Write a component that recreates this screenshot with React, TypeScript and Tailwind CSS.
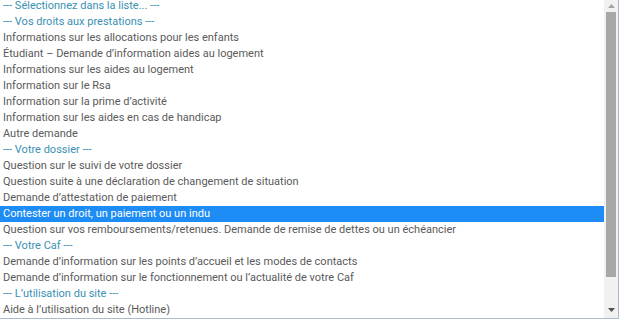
import React from "react";

type Item = { label: string; group?: boolean; selected?: boolean };

const items: Item[] = [
  { label: "--- Sélectionnez dans la liste... ---", group: true },
  { label: "--- Vos droits aux prestations ---", group: true },
  { label: "Informations sur les allocations pour les enfants" },
  { label: "Étudiant – Demande d’information aides au logement" },
  { label: "Informations sur les aides au logement" },
  { label: "Information sur le Rsa" },
  { label: "Information sur la prime d’activité" },
  { label: "Information sur les aides en cas de handicap" },
  { label: "Autre demande" },
  { label: "--- Votre dossier ---", group: true },
  { label: "Question sur le suivi de votre dossier" },
  { label: "Question suite à une déclaration de changement de situation" },
  { label: "Demande d’attestation de paiement" },
  { label: "Contester un droit, un paiement ou un indu", selected: true },
  { label: "Question sur vos remboursements/retenues. Demande de remise de dettes ou un échéancier" },
  { label: "--- Votre Caf ---", group: true },
  { label: "Demande d’information sur les points d’accueil et les modes de contacts" },
  { label: "Demande d’information sur le fonctionnement ou l’actualité de votre Caf" },
  { label: "--- L’utilisation du site ---", group: true },
  { label: "Aide à l’utilisation du site (Hotline)" },
];

export default function App() {
  return (
    <div className="w-[620px] h-[319px] bg-white overflow-hidden">
      <div className="flex w-[619px] h-[319px] border-r border-b border-[#a9bccf] font-['Roboto',sans-serif] text-[11px]">
        {/* options */}
        <div className="flex-1 overflow-hidden">
          <div className="-mt-[2px] flex flex-col">
            {items.map((it, i) => (
              <div
                key={i}
                className={
                  "h-[16px] leading-[16px] pl-[3px] whitespace-nowrap " +
                  (it.selected
                    ? "bg-[#1e8cf5] text-white"
                    : it.group
                    ? "text-[#3a90b3]"
                    : "text-[#5a5a5a]")
                }
              >
                {it.label}
              </div>
            ))}
          </div>
        </div>

        {/* scrollbar */}
        <div className="w-[14px] bg-[#f1f1f1] flex flex-col items-center">
          <div className="h-[12px] flex items-center justify-center">
            <svg width="7" height="4" viewBox="0 0 7 4">
              <path d="M0 4 L3.5 0 L7 4 Z" fill="#a3a3a3" />
            </svg>
          </div>
          <div className="w-[10px] h-[265px] bg-[#a8a8a8]" />
          <div className="flex-1" />
          <div className="h-[17px] flex items-center justify-center">
            <svg width="7" height="4" viewBox="0 0 7 4">
              <path d="M0 0 L7 0 L3.5 4 Z" fill="#505050" />
            </svg>
          </div>
        </div>
      </div>
    </div>
  );
}
